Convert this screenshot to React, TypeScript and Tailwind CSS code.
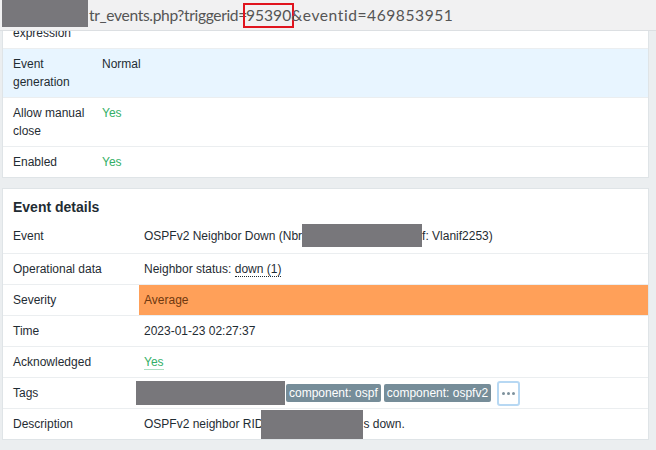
import React from "react";

const Row = ({
  label,
  children,
  labelW,
  last,
  highlight,
  valueClass = "",
}: {
  label: React.ReactNode;
  children?: React.ReactNode;
  labelW: string;
  last?: boolean;
  highlight?: boolean;
  valueClass?: string;
}) => (
  <div
    className={`flex ${last ? "" : "border-b border-[#ebeef0]"} ${highlight ? "bg-[#e8f5ff]" : ""}`}
  >
    <div className={`${labelW} shrink-0 pl-[10px] pr-[5px] py-[6px] leading-[18px]`}>{label}</div>
    <div className={`flex-1 pl-[5px] pr-[5px] py-[6px] leading-[18px] ${valueClass}`}>{children}</div>
  </div>
);

const Redact = ({ className }: { className: string }) => (
  <span className={`inline-block bg-[#78777b] align-middle ${className}`} />
);

export default function App() {
  return (
    <div
      className="w-[656px] h-[450px] overflow-hidden bg-[#ebeef0] flex flex-col text-[12px] text-[#1f2c33]"
      style={{ fontFamily: '"Liberation Sans", Arial, sans-serif' }}
    >
      <div
        className="h-[31px] shrink-0 bg-[#f1f1f2] border-b border-[#dcdfe2] flex items-start text-[#555555] text-[15.6px] z-10"
        style={{ fontFamily: 'Lato, "Noto Sans", sans-serif' }}
      >
        <span className="ml-[2px] w-[86px] h-[27px] bg-[#78777b] shrink-0" />
        <span className="ml-[1px] leading-[28px] mt-[1px] whitespace-nowrap">
          <span className="tracking-[-0.35px]">tr_events.php?triggerid=</span>
          <span className="inline-block border-2 border-[#e0141e] leading-[21px] px-[1px] -ml-[4px] -mr-[3px] align-top mt-[2px] h-[25px]">
            95390
          </span>
          <span className="tracking-[0.55px]">&amp;eventid=469853951</span>
        </span>
      </div>
      <div className="flex-1 overflow-hidden pl-[2px] pr-[7px]">
        <div className="mt-[-32px] bg-white border border-[#dfe4e7]">
          <Row labelW="w-[94px]" label="Problem expression">
            {""}
          </Row>
          <Row labelW="w-[94px]" label="Event generation" highlight>
            Normal
          </Row>
          <Row labelW="w-[94px]" label="Allow manual close">
            <span className="text-[#34af67]">Yes</span>
          </Row>
          <Row labelW="w-[94px]" label="Enabled" last>
            <span className="text-[#34af67]">Yes</span>
          </Row>
        </div>

        <div className="mt-[10px] bg-white border border-[#dfe4e7]">
          <div className="pl-[10px] pt-[9px] pb-[5px] h-[32px] text-[14px] font-bold leading-[18px] text-[#1f2c33]">
            Event details
          </div>
          <Row labelW="w-[136px]" label="Event">
            <span className="whitespace-nowrap">
              OSPFv2 Neighbor Down (Nbr
              <Redact className="w-[120px] h-[23px] -mt-[3px]" />
              f: Vlanif2253)
            </span>
          </Row>
          <Row labelW="w-[136px]" label="Operational data">
            Neighbor status:{" "}
            <span className="border-b border-dotted border-[#1f2c33]">down (1)</span>
          </Row>
          <Row labelW="w-[136px]" label="Severity" valueClass="bg-[#ffa059] text-[#6e3810]">
            Average
          </Row>
          <Row labelW="w-[136px]" label="Time">
            2023-01-23 02:27:37
          </Row>
          <Row labelW="w-[136px]" label="Acknowledged">
            <span className="text-[#34af67] border-b border-[#34af67]/40">Yes</span>
          </Row>
          <div className="flex border-b border-[#ebeef0]">
            <div className="w-[136px] shrink-0 pl-[10px] pr-[5px] py-[6px] leading-[18px]">Tags</div>
            <div className="flex-1 flex items-center pl-[2px]">
              <span className="w-[149px] h-[24px] bg-[#78777b] -ml-[5px]" />
              <span className="ml-[1px] h-[18px] leading-[18px] px-[3px] rounded-[2px] bg-[#768d99] text-white whitespace-nowrap">
                component: ospf
              </span>
              <span className="ml-[3px] h-[18px] leading-[18px] px-[3px] rounded-[2px] bg-[#768d99] text-white whitespace-nowrap">
                component: ospfv2
              </span>
              <span className="ml-[6px] w-[23px] h-[25px] rounded-[3px] border-2 border-[#b7d8f3] bg-white flex items-center justify-center gap-[2px]">
                <span className="w-[3px] h-[3px] rounded-full bg-[#7d919c]" />
                <span className="w-[3px] h-[3px] rounded-full bg-[#7d919c]" />
                <span className="w-[3px] h-[3px] rounded-full bg-[#7d919c]" />
              </span>
            </div>
          </div>
          <div className="flex">
            <div className="w-[136px] shrink-0 pl-[10px] pr-[5px] py-[6px] leading-[18px]">Description</div>
            <div className="flex-1 flex items-center pl-[5px] whitespace-nowrap">
              OSPFv2 neighbor RID
              <span className="w-[102px] h-[29px] bg-[#78777b] self-start mt-[1px] -ml-[2px]" />
              s down.
            </div>
          </div>
        </div>
      </div>
    </div>
  );
}
